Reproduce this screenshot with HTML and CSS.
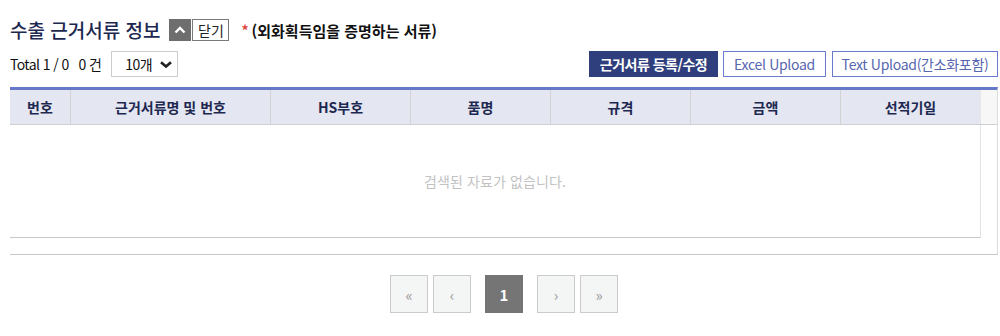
FILE: index.html
```html
<!DOCTYPE html>
<html lang="ko">
<head>
<meta charset="utf-8">
<title>수출 근거서류 정보</title>
<link rel="stylesheet" href="styles.css">
</head>
<body>
<div class="page">
  <div class="title-row">
    <h2 class="title">수출 근거서류 정보</h2>
    <button class="toggle" type="button" aria-label="접기">
      <svg width="12" height="8" viewBox="0 0 12 8"><path d="M1.5 6.5 L6 2 L10.5 6.5" fill="none" stroke="#fff" stroke-width="2.4"/></svg>
    </button>
    <button class="close-btn" type="button">닫기</button>
    <span class="req">*</span>
    <span class="desc">(외화획득임을 증명하는 서류)</span>
  </div>

  <div class="toolbar">
    <div class="tb-left">
      <span class="total">Total 1 / 0</span>
      <span class="count">0 건</span>
      <div class="select">
        <span>10개</span>
        <svg width="14" height="9" viewBox="0 0 14 9"><path d="M2 2.2 L7 6.6 L12 2.2" fill="none" stroke="#222" stroke-width="2.6"/></svg>
      </div>
    </div>
    <div class="tb-right">
      <button class="btn btn-primary" type="button">근거서류 등록/수정</button>
      <button class="btn btn-line excel" type="button">Excel Upload</button>
      <button class="btn btn-line text" type="button">Text Upload(간소화포함)</button>
    </div>
  </div>

  <div class="grid">
    <div class="grid-head">
      <div class="cols">
        <div class="th c1">번호</div>
        <div class="th c2">근거서류명 및 번호</div>
        <div class="th c3">HS부호</div>
        <div class="th c4">품명</div>
        <div class="th c5">규격</div>
        <div class="th c6">금액</div>
        <div class="th c7">선적기일</div>
      </div>
      <div class="gutter"></div>
    </div>
    <div class="grid-body">
      <div class="body-inner">
        <p class="empty">검색된 자료가 없습니다.</p>
      </div>
    </div>
  </div>

  <div class="pager">
    <button class="pg" type="button">«</button>
    <button class="pg" type="button">‹</button>
    <button class="pg current" type="button">1</button>
    <button class="pg" type="button">›</button>
    <button class="pg" type="button">»</button>
  </div>
</div>
</body>
</html>
```

FILE: styles.css
```css
* { box-sizing: border-box; }
html, body { margin: 0; padding: 0; background: #fff; }
body {
  font-family: "Noto Sans CJK KR", "Noto Sans", sans-serif;
  color: #222;
}
button { font-family: inherit; cursor: pointer; }

.page { padding: 19px 2px 0 10px; width: 1000px; }

.title-row { display: flex; align-items: center; height: 22px; }
.title {
  margin: 0;
  font-size: 19px;
  line-height: 22px;
  font-weight: 500;
  color: #1d2850;
}
.toggle {
  margin-left: 9px;
  width: 22px; height: 22px;
  background: #6e6e6e;
  border: 0; padding: 0;
  display: flex; align-items: center; justify-content: center;
}
.close-btn {
  margin-left: 1px;
  width: 37px; height: 22px;
  border: 1px solid #7a7a7a;
  background: #fff;
  font-size: 14px;
  line-height: 18px;
  padding: 0;
  color: #222;
}
.req { margin-left: 12px; color: #e0443e; font-size: 14px; font-weight: 700; }
.desc { margin-left: 3px; font-size: 15px; font-weight: 700; color: #111; letter-spacing: 0; }

.toolbar {
  margin-top: 10px;
  height: 26px;
  display: flex;
  justify-content: space-between;
  align-items: center;
}
.tb-left { display: flex; align-items: center; font-size: 14px; letter-spacing: -0.6px; color: #111; }
.count { margin-left: 10px; }
.select {
  margin-left: 10px;
  width: 67px; height: 26px;
  border: 1px solid #ccc;
  display: flex; align-items: center;
  padding-left: 13px;
  gap: 7px;
  font-size: 14px;
}
.tb-right { display: flex; gap: 5px; }
.btn {
  height: 26px;
  font-size: 14px;
  padding: 0;
  line-height: 22px;
  letter-spacing: -0.3px;
}
.btn-primary {
  width: 129px;
  background: #2f3e7d;
  border: 0;
  color: #fff;
  font-weight: 700;
  letter-spacing: -0.5px;
}
.btn-line {
  background: #fff;
  border: 1px solid #6a7bd0;
  color: #5666b0;
}
.excel { width: 103px; }
.text { width: 166px; margin-left: 1px; }

.grid {
  margin-top: 10px;
  width: 988px;
  border-top: 3px solid #6678c8;
  border-right: 1px solid #dcdcdc;
  border-bottom: 1px solid #c8c8c8;
  height: 168px;
}
.grid-head { display: flex; height: 35px; border-bottom: 1px solid #cfcfcf; }
.cols { display: flex; width: 970px; background: #e4e6f1; }
.th {
  display: flex; align-items: center; justify-content: center;
  font-size: 14px; font-weight: 700; color: #1d2850;
  border-left: 1px solid #d2d2d2;
}
.th.c1 { border-left: 0; width: 60px; }
.c2 { width: 200px; }
.c3 { width: 140px; }
.c4 { width: 140px; }
.c5 { width: 140px; }
.c6 { width: 150px; }
.c7 { width: 140px; }
.gutter { flex: 1; background: #f7f7f7; border-left: 1px solid #e6e6e6; }

.grid-body { height: 130px; }
.body-inner {
  width: 971px;
  height: 113px;
  border-right: 1px solid #e3e3e3;
  border-bottom: 1px solid #c8c8c8;
  display: flex; align-items: center; justify-content: center;
}
.empty { margin: 0; font-size: 14px; color: #c2c2c2; letter-spacing: 0.1px; }

.pager {
  margin-top: 20px;
  width: 988px;
  display: flex;
  justify-content: center;
  gap: 5px;
}
.pg {
  width: 38px; height: 38px;
  border: 1px solid #cbcbcb;
  background: #f4f5f5;
  color: #999;
  font-size: 15px;
  padding: 0;
}
.pg.current {
  background: #757575;
  border-color: #757575;
  color: #fff;
  font-weight: 700;
  margin: 0 9px;
}
```
